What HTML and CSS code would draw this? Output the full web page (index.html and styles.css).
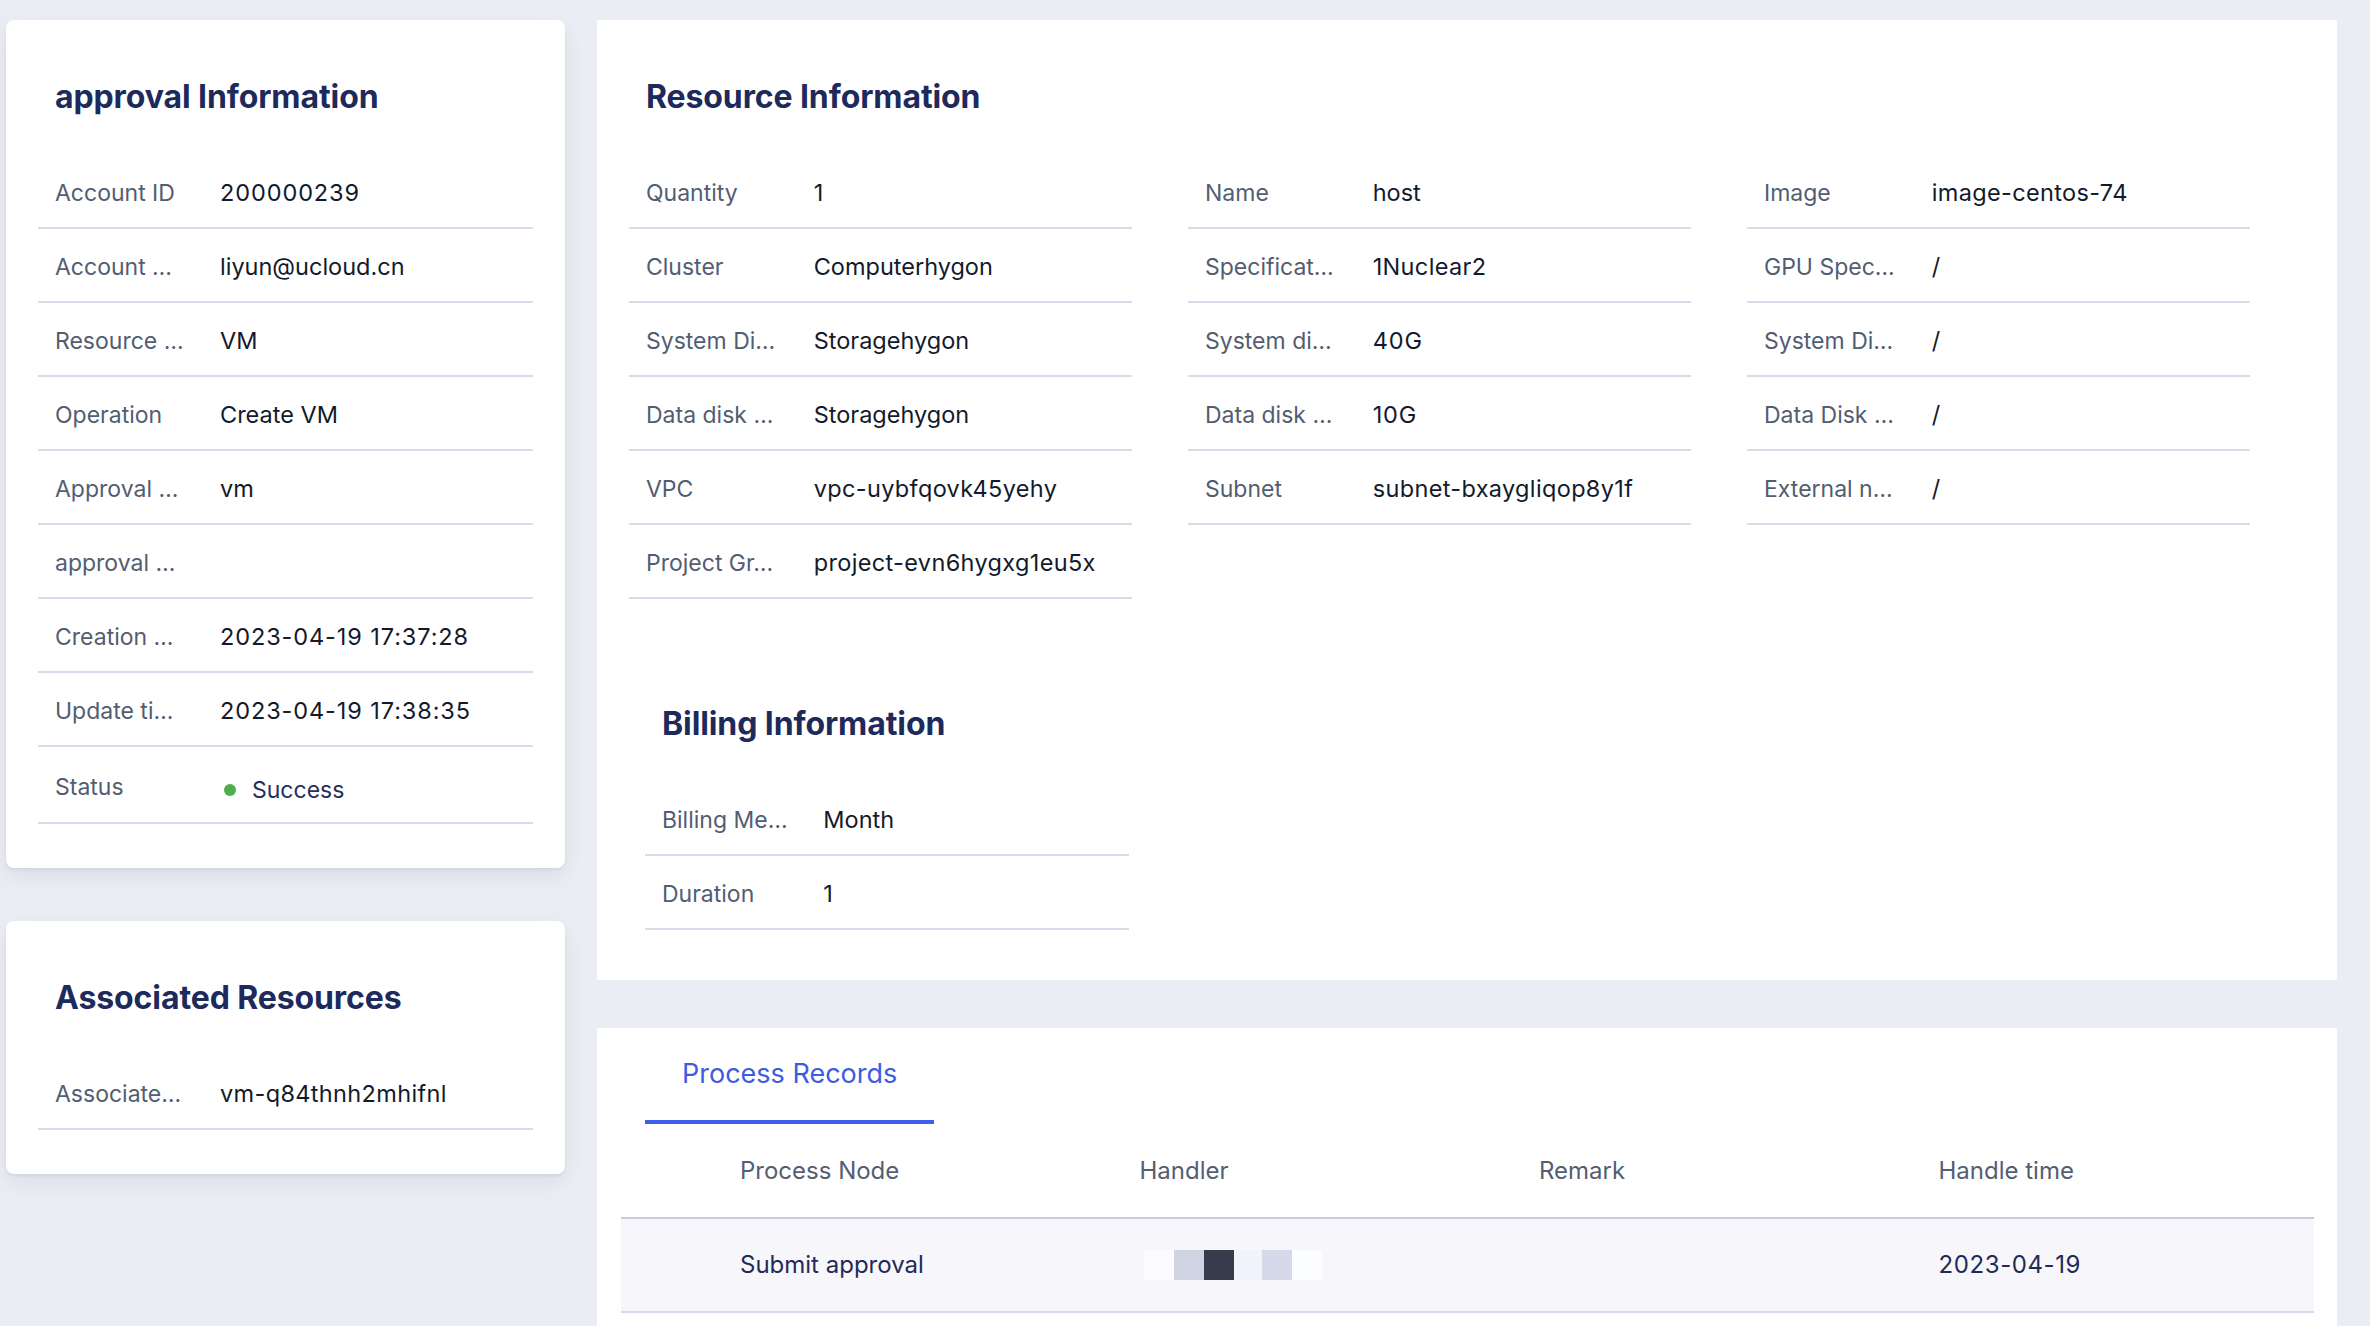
FILE: index.html
```html
<!DOCTYPE html>
<html lang="en">
<head>
<meta charset="utf-8">
<title>Approval Detail</title>
<link rel="stylesheet" href="styles.css">
</head>
<body>
<div class="page">
  <aside class="side">
    <section class="card">
      <h2 class="title">approval Information</h2>
      <div class="row"><span class="label">Account ID</span><span class="value num">200000239</span></div>
      <div class="row"><span class="label">Account …</span><span class="value">liyun@ucloud.cn</span></div>
      <div class="row"><span class="label">Resource …</span><span class="value">VM</span></div>
      <div class="row"><span class="label">Operation</span><span class="value">Create VM</span></div>
      <div class="row"><span class="label">Approval …</span><span class="value">vm</span></div>
      <div class="row"><span class="label">approval …</span><span class="value"></span></div>
      <div class="row"><span class="label">Creation …</span><span class="value num">2023-04-19 17:37:28</span></div>
      <div class="row"><span class="label">Update ti…</span><span class="value num">2023-04-19 17:38:35</span></div>
      <div class="row row-status"><span class="label">Status</span><span class="value status"><i class="dot"></i>Success</span></div>
    </section>
    <section class="card">
      <h2 class="title">Associated Resources</h2>
      <div class="row"><span class="label">Associate…</span><span class="value id">vm-q84thnh2mhifnl</span></div>
    </section>
  </aside>

  <main class="main">
    <section class="panel">
      <h2 class="title">Resource Information</h2>
      <div class="grid">
        <div class="col">
          <div class="row"><span class="label">Quantity</span><span class="value">1</span></div>
          <div class="row"><span class="label">Cluster</span><span class="value">Computerhygon</span></div>
          <div class="row"><span class="label">System Di…</span><span class="value">Storagehygon</span></div>
          <div class="row"><span class="label">Data disk …</span><span class="value">Storagehygon</span></div>
          <div class="row"><span class="label">VPC</span><span class="value id">vpc-uybfqovk45yehy</span></div>
          <div class="row"><span class="label">Project Gr…</span><span class="value id">project-evn6hygxg1eu5x</span></div>
        </div>
        <div class="col">
          <div class="row"><span class="label">Name</span><span class="value">host</span></div>
          <div class="row"><span class="label">Specificat…</span><span class="value id">1Nuclear2</span></div>
          <div class="row"><span class="label">System di…</span><span class="value num">40G</span></div>
          <div class="row"><span class="label">Data disk …</span><span class="value num">10G</span></div>
          <div class="row"><span class="label">Subnet</span><span class="value id">subnet-bxaygliqop8y1f</span></div>
        </div>
        <div class="col">
          <div class="row"><span class="label">Image</span><span class="value id">image-centos-74</span></div>
          <div class="row"><span class="label">GPU Spec…</span><span class="value">/</span></div>
          <div class="row"><span class="label">System Di…</span><span class="value">/</span></div>
          <div class="row"><span class="label">Data Disk …</span><span class="value">/</span></div>
          <div class="row"><span class="label">External n…</span><span class="value">/</span></div>
        </div>
      </div>
      <div class="billing">
        <h2 class="title">Billing Information</h2>
        <div class="row"><span class="label">Billing Me…</span><span class="value">Month</span></div>
        <div class="row"><span class="label">Duration</span><span class="value">1</span></div>
      </div>
    </section>

    <section class="panel records">
      <div class="tabs">
        <div class="tab active">Process Records</div>
      </div>
      <div class="table">
        <div class="thead">
          <span class="cell"></span>
          <span class="cell">Process Node</span>
          <span class="cell">Handler</span>
          <span class="cell">Remark</span>
          <span class="cell">Handle time</span>
        </div>
        <div class="trow">
          <span class="cell"></span>
          <span class="cell">Submit approval</span>
          <span class="cell"><span class="mosaic"><i class="m1"></i><i class="m2"></i><i class="m3"></i><i class="m4"></i><i class="m5"></i><i class="m6"></i></span></span>
          <span class="cell"></span>
          <span class="cell num">2023-04-19</span>
        </div>
      </div>
    </section>
  </main>
</div>
</body>
</html>
```

FILE: styles.css
```css
* { box-sizing: border-box; }

html, body {
  margin: 0;
  padding: 0;
}

body {
  background: #ebedf4;
  font-family: Inter, "Noto Sans", "Liberation Sans", sans-serif;
  color: #141a2b;
  overflow: hidden;
}

.page {
  display: flex;
  align-items: flex-start;
  gap: 32px;
  padding: 20px 33px 0 6px;
}

.side {
  width: 559px;
  flex: none;
  display: flex;
  flex-direction: column;
  gap: 53px;
}

.card {
  background: #fff;
  border-radius: 8px;
  padding: 0 32px 44px;
  box-shadow: 0 2px 3px rgba(20, 25, 50, 0.06), 0 8px 22px rgba(20, 25, 50, 0.07);
}

.title {
  margin: 0;
  padding: 57px 0 38px 17px;
  line-height: 40px;
  font-size: 32px;
  font-weight: 700;
  color: #1d2a5c;
  letter-spacing: -0.1px;
}

.row {
  display: grid;
  grid-template-columns: calc((100% + 17px) / 3) 1fr;
  align-items: center;
  height: 74px;
  padding: 4px 0 0 17px;
  border-bottom: 2px solid #d9dbeb;
  font-size: 23px;
  line-height: 30px;
}

.row-status {
  height: 77px;
}

.label {
  color: #535d72;
  white-space: nowrap;
  overflow: hidden;
}

.value {
  color: #131a2c;
  white-space: nowrap;
  font-size: 23.5px;
}

.num {
  letter-spacing: 0.9px;
}

.id {
  letter-spacing: 0.35px;
}

.status {
  display: flex;
  align-items: center;
  padding-top: 6px;
  color: #25305e;
  font-size: 23px;
}

.dot {
  width: 12px;
  height: 12px;
  border-radius: 50%;
  background: #4fae4a;
  margin: 0 16px 0 4px;
  flex: none;
}

.main {
  flex: 1;
  display: flex;
  flex-direction: column;
  gap: 48px;
  min-width: 0;
}

.panel {
  background: #fff;
  padding: 0 32px 50px;
}

.grid {
  display: grid;
  grid-template-columns: repeat(3, 503px);
  column-gap: 56px;
  align-items: start;
}

.billing {
  width: 484px;
  margin: 48px 0 0 16px;
}

.records {
  padding: 0 23px 0 24px;
  min-height: 320px;
}

.tabs {
  display: flex;
  padding-left: 24px;
}

.tab {
  padding: 26px 37px;
  line-height: 40px;
  font-size: 27px;
  color: #3d5ce0;
  border-bottom: 4px solid #3f5fe8;
}

.thead,
.trow {
  display: grid;
  grid-template-columns: 95px repeat(4, 1fr);
  align-items: center;
  font-size: 24px;
  line-height: 30px;
}

.thead {
  height: 95px;
  border-bottom: 2px solid #c9ccdc;
  color: #545e73;
}

.trow {
  height: 94px;
  background: #f6f6fb;
  border-bottom: 2px solid #d7d9ea;
  color: #1f2a57;
}

.trow .num {
  letter-spacing: 0.6px;
}

.cell {
  padding-left: 24px;
  white-space: nowrap;
}

.thead .cell:first-child,
.trow .cell:first-child {
  padding-left: 0;
}

.mosaic {
  display: flex;
  height: 30px;
  margin-left: 4px;
}

.mosaic i {
  display: block;
  width: 30px;
  height: 30px;
}

.mosaic .m1 { background: #fbfbff; }
.mosaic .m2 { background: #d0d3e2; }
.mosaic .m3 { background: #383b4c; }
.mosaic .m4 { background: #f2f4fc; width: 28px; }
.mosaic .m5 { background: #d6d9ea; }
.mosaic .m6 { background: #fbfdff; }
```
